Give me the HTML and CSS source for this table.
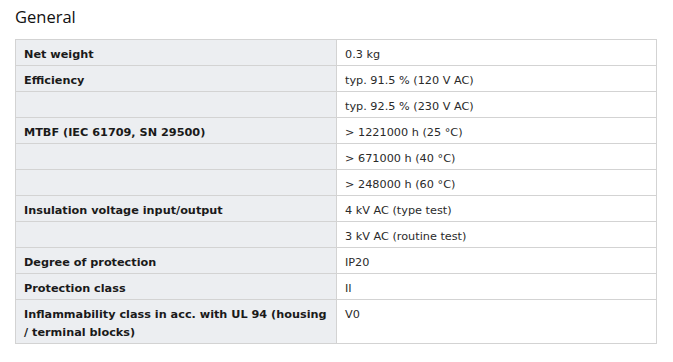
FILE: index.html
```html
<!DOCTYPE html>
<html>
<head>
<meta charset="utf-8">
<link rel="stylesheet" href="styles.css">
</head>
<body>
<h2 class="title">General</h2>
<table class="spec">
  <tr><th>Net weight</th><td>0.3 kg</td></tr>
  <tr><th>Efficiency</th><td>typ. 91.5 % (120 V AC)</td></tr>
  <tr><th></th><td>typ. 92.5 % (230 V AC)</td></tr>
  <tr><th>MTBF (IEC 61709, SN 29500)</th><td>&gt; 1221000 h (25 °C)</td></tr>
  <tr><th></th><td>&gt; 671000 h (40 °C)</td></tr>
  <tr><th></th><td>&gt; 248000 h (60 °C)</td></tr>
  <tr><th>Insulation voltage input/output</th><td>4 kV AC (type test)</td></tr>
  <tr><th></th><td>3 kV AC (routine test)</td></tr>
  <tr><th>Degree of protection</th><td>IP20</td></tr>
  <tr><th>Protection class</th><td>II</td></tr>
  <tr><th>Inflammability class in acc. with UL 94 (housing / terminal blocks)</th><td>V0</td></tr>
</table>
</body>
</html>
```
FILE: styles.css
```css
body {
  margin: 0;
  padding: 0 15px;
  background: #ffffff;
  font-family: "DejaVu Sans", Verdana, sans-serif;
  color: #222222;
}
.title {
  margin: 0;
  padding-top: 5px;
  height: 34px;
  font-family: "Open Sans", sans-serif;
  font-weight: 400;
  font-size: 16.5px;
  line-height: 24px;
  color: #111111;
}
.spec {
  border-collapse: collapse;
  width: 642px;
  font-size: 11.25px;
  line-height: 18px;
}
.spec th, .spec td {
  border: 1px solid #d3d3d3;
  padding: 6px 8px 1px 8px;
  text-align: left;
  vertical-align: top;
  height: 18px;
}
.spec th {
  width: 304px;
  background: #eceef1;
  font-weight: 700;
  color: #1a1a1a;
}
.spec td {
  background: #ffffff;
  color: #2a2a2a;
}
```
